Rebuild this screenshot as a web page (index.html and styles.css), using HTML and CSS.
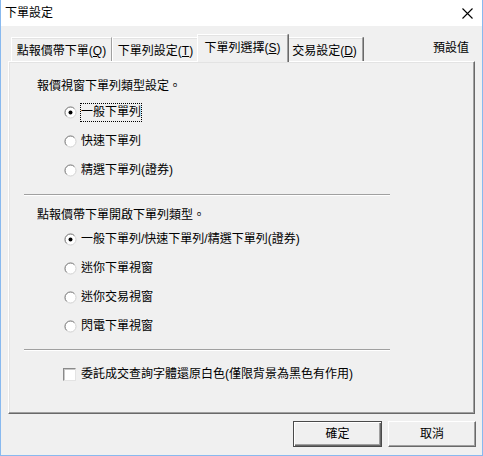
FILE: index.html
```html
<!DOCTYPE html>
<html lang="zh-Hant">
<head>
<meta charset="utf-8">
<title>下單設定</title>
<link rel="stylesheet" href="styles.css">
</head>
<body>
<div class="window">
  <div class="titlebar">
    <span class="title">下單設定</span>
    <svg class="close" width="11" height="11" viewBox="0 0 11 11"><path d="M0.5 0.5 L10.5 10.5 M10.5 0.5 L0.5 10.5" stroke="#000" stroke-width="1.1" fill="none"/></svg>
  </div>
  <div class="client">
    <div class="tabbar">
      <div class="tab t1">點報價帶下單(<u>Q</u>)</div>
      <div class="tab t2">下單列設定(<u>T</u>)</div>
      <div class="tab t3 active">下單列選擇(<u>S</u>)</div>
      <div class="tab t4">交易設定(<u>D</u>)</div>
      <div class="preset">預設值</div>
    </div>
    <div class="panel">
      <div class="group first">
        <div class="group-title">報價視窗下單列類型設定。</div>
        <div class="options">
          <div class="option">
            <svg class="radio" width="13" height="13" viewBox="0 0 13 13"><circle cx="6.5" cy="6.5" r="5.5" fill="#fff" stroke="#d2d2d2"/><path d="M2.6 10.4 A5.5 5.5 0 0 1 10.4 2.6" stroke="#808080" fill="none"/><circle cx="6.5" cy="6.5" r="2" fill="#000"/></svg>
            <span class="label focus">一般下單列</span>
          </div>
          <div class="option">
            <svg class="radio" width="13" height="13" viewBox="0 0 13 13"><circle cx="6.5" cy="6.5" r="5.5" fill="#fff" stroke="#d2d2d2"/><path d="M2.6 10.4 A5.5 5.5 0 0 1 10.4 2.6" stroke="#808080" fill="none"/></svg>
            <span class="label">快速下單列</span>
          </div>
          <div class="option">
            <svg class="radio" width="13" height="13" viewBox="0 0 13 13"><circle cx="6.5" cy="6.5" r="5.5" fill="#fff" stroke="#d2d2d2"/><path d="M2.6 10.4 A5.5 5.5 0 0 1 10.4 2.6" stroke="#808080" fill="none"/></svg>
            <span class="label">精選下單列(證券)</span>
          </div>
        </div>
      </div>
      <div class="sep"></div>
      <div class="group second">
        <div class="group-title">點報價帶下單開啟下單列類型。</div>
        <div class="options">
          <div class="option">
            <svg class="radio" width="13" height="13" viewBox="0 0 13 13"><circle cx="6.5" cy="6.5" r="5.5" fill="#fff" stroke="#d2d2d2"/><path d="M2.6 10.4 A5.5 5.5 0 0 1 10.4 2.6" stroke="#808080" fill="none"/><circle cx="6.5" cy="6.5" r="2" fill="#000"/></svg>
            <span class="label">一般下單列/快速下單列/精選下單列(證券)</span>
          </div>
          <div class="option">
            <svg class="radio" width="13" height="13" viewBox="0 0 13 13"><circle cx="6.5" cy="6.5" r="5.5" fill="#fff" stroke="#d2d2d2"/><path d="M2.6 10.4 A5.5 5.5 0 0 1 10.4 2.6" stroke="#808080" fill="none"/></svg>
            <span class="label">迷你下單視窗</span>
          </div>
          <div class="option">
            <svg class="radio" width="13" height="13" viewBox="0 0 13 13"><circle cx="6.5" cy="6.5" r="5.5" fill="#fff" stroke="#d2d2d2"/><path d="M2.6 10.4 A5.5 5.5 0 0 1 10.4 2.6" stroke="#808080" fill="none"/></svg>
            <span class="label">迷你交易視窗</span>
          </div>
          <div class="option">
            <svg class="radio" width="13" height="13" viewBox="0 0 13 13"><circle cx="6.5" cy="6.5" r="5.5" fill="#fff" stroke="#d2d2d2"/><path d="M2.6 10.4 A5.5 5.5 0 0 1 10.4 2.6" stroke="#808080" fill="none"/></svg>
            <span class="label">閃電下單視窗</span>
          </div>
        </div>
      </div>
      <div class="sep"></div>
      <div class="check-row">
        <span class="checkbox"></span>
        <span class="label">委託成交查詢字體還原白色(僅限背景為黑色有作用)</span>
      </div>
    </div>
    <div class="buttons">
      <div class="btn default">確定</div>
      <div class="btn">取消</div>
    </div>
  </div>
</div>
</body>
</html>
```

FILE: styles.css
```css
html, body {
  margin: 0;
  padding: 0;
  background: #f0f0f0;
}

body {
  font-family: "Liberation Sans", "Noto Sans CJK TC", sans-serif;
  font-size: 12px;
  color: #000;
}

.window {
  width: 483px;
  height: 456px;
  box-sizing: border-box;
  border: 1px solid #88b9ef;
  border-top: none;
  background: #f0f0f0;
  display: flex;
  flex-direction: column;
}

.titlebar {
  height: 26px;
  background: #fff;
  display: flex;
  align-items: center;
  justify-content: space-between;
  padding: 0 9px 0 4px;
  flex: none;
}

.title {
  line-height: 18px;
  padding-bottom: 1px;
}

.close {
  display: block;
}

.client {
  flex: 1;
  display: flex;
  flex-direction: column;
}

.tabbar {
  display: flex;
  align-items: flex-end;
  height: 28px;
  padding: 8px 13px 0 10px;
  margin-bottom: -1px;
}

.tab {
  box-sizing: border-box;
  height: 24px;
  margin-bottom: 1px;
  padding-top: 5px;
  line-height: 17px;
  text-align: center;
  white-space: nowrap;
  background: #f0f0f0;
  border-top: 1px solid #fff;
  border-left: 1px solid #fff;
  border-right: 1px solid #a0a0a0;
  box-shadow: 1px 0 0 #696969, inset 0 1px 0 #e3e3e3;
  border-radius: 1px 1px 0 0;
}

.tab u {
  text-decoration: underline;
  text-underline-offset: 1px;
}

.t1 { width: 101px; }
.t2 { width: 87px; }
.t3 { width: 87px; }
.t4 { width: 77px; }

.tab.active {
  position: relative;
  z-index: 1;
  height: 28px;
  margin: 0 -2px;
  width: 91px;
  padding-top: 5px;
}

.preset {
  margin-left: auto;
  align-self: center;
  line-height: 17px;
  padding-top: 1px;
}

.panel {
  box-sizing: border-box;
  height: 353px;
  margin: 0 7px;
  border-top: 1px solid #fff;
  border-left: 1px solid #fff;
  border-right: 1px solid #696969;
  border-bottom: 1px solid #696969;
  box-shadow: inset -1px -1px 0 #a0a0a0, inset 1px 1px 0 #e3e3e3;
  padding: 15px 0 0 28px;
}

.group-title {
  line-height: 18px;
}

.options {
  padding-left: 27px;
  margin-top: 3px;
}

.second .options {
  margin-top: 1px;
}

.option {
  display: flex;
  align-items: center;
  height: 29px;
}

.radio {
  display: block;
  flex: none;
}

.label {
  line-height: 17px;
  padding: 1px 1px;
  margin-left: 3px;
  white-space: nowrap;
}

.label.focus {
  outline: 1px dotted #000;
  outline-offset: -1px;
}

.sep {
  width: 366px;
  margin: 9px 0 0 -13px;
  border-top: 1px solid #a0a0a0;
  border-bottom: 1px solid #fff;
}

.group.second {
  margin-top: 10px;
}

.group.second + .sep {
  margin-top: 8px;
}

.sep + .check-row {
  margin-top: 13px;
}

.check-row {
  display: flex;
  align-items: center;
  height: 20px;
  padding-left: 26px;
}

.checkbox {
  box-sizing: border-box;
  width: 13px;
  height: 13px;
  flex: none;
  background: #fff;
  border: 1px solid;
  border-color: #8a8a8a #e3e3e3 #e3e3e3 #8a8a8a;
  box-shadow: inset 1px 1px 0 #c8c8c8;
}

.check-row .label {
  margin-left: 4px;
}

.buttons {
  display: flex;
  justify-content: flex-end;
  gap: 6px;
  margin-top: 7px;
  padding-right: 6px;
}

.btn {
  box-sizing: border-box;
  height: 26px;
  width: 88px;
  display: flex;
  align-items: center;
  justify-content: center;
  background: #f0f0f0;
  border: 1px solid;
  border-color: #fff #696969 #696969 #fff;
  box-shadow: inset -1px -1px 0 #a0a0a0;
  line-height: 17px;
  padding-top: 1px;
}

.btn.default {
  width: 89px;
  border: 1px solid #4a4a4a;
  box-shadow: inset 1px 1px 0 #fff, inset -1px -1px 0 #696969, inset -2px -2px 0 #a0a0a0;
}
```
